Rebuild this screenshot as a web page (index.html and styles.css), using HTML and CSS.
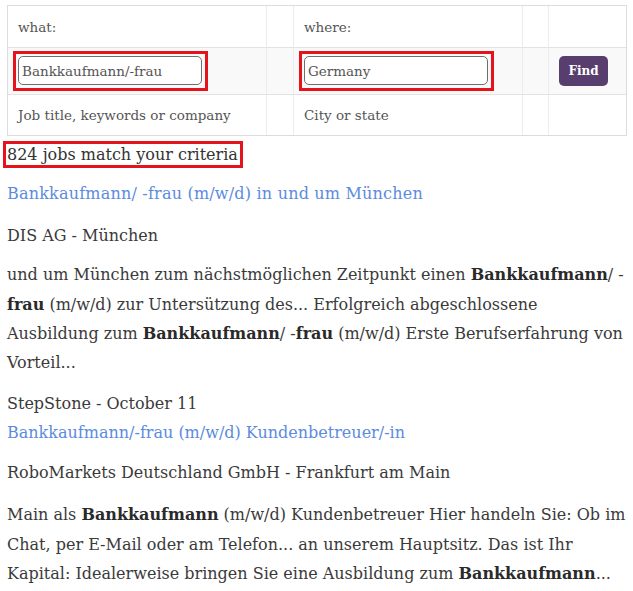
FILE: index.html
```html
<!DOCTYPE html>
<html lang="de">
<head>
<meta charset="utf-8">
<title>Jobs</title>
<link rel="stylesheet" href="styles.css">
</head>
<body>
<div class="page">
  <div class="search">
    <div class="cell label">what:</div>
    <div class="cell"></div>
    <div class="cell label">where:</div>
    <div class="cell"></div>
    <div class="cell end"></div>

    <div class="cell field"><span class="mark"><input type="text" value="Bankkaufmann/-frau"></span></div>
    <div class="cell field"></div>
    <div class="cell field"><span class="mark"><input type="text" value="Germany"></span></div>
    <div class="cell field"></div>
    <div class="cell field end"><button class="find" type="button">Find</button></div>

    <div class="cell label last">Job title, keywords or company</div>
    <div class="cell last"></div>
    <div class="cell label last">City or state</div>
    <div class="cell last"></div>
    <div class="cell last end"></div>
  </div>

  <p class="count"><span class="mark-text">824 jobs match your criteria</span></p>

  <p class="title"><a href="#">Bankkaufmann/ -frau (m/w/d) in und um München</a></p>
  <p class="company">DIS AG - München</p>
  <p class="snippet">und um München zum nächstmöglichen Zeitpunkt einen <b>Bankkaufmann</b>/ -<b>frau</b> (m/w/d) zur Untersützung des... Erfolgreich abgeschlossene Ausbildung zum <b>Bankkaufmann</b>/ -<b>frau</b> (m/w/d) Erste Berufserfahrung von Vorteil...</p>
  <p class="source">StepStone - October 11<br><a href="#">Bankkaufmann/-frau (m/w/d) Kundenbetreuer/-in</a></p>
  <p class="company2">RoboMarkets Deutschland GmbH - Frankfurt am Main</p>
  <p class="snippet">Main als <b>Bankkaufmann</b> (m/w/d) Kundenbetreuer Hier handeln Sie: Ob im Chat, per E-Mail oder am Telefon... an unserem Hauptsitz. Das ist Ihr Kapital: Idealerweise bringen Sie eine Ausbildung zum <b>Bankkaufmann</b>...</p>
</div>
</body>
</html>
```

FILE: styles.css
```css
body {
  margin: 0;
  background: #fff;
  color: #3a3a3a;
  font-family: "DejaVu Serif", "Liberation Serif", serif;
}

.page {
  padding: 5px 6px 0 7px;
}

.search {
  display: grid;
  grid-template-columns: 259px 27px 229px 26px 1fr;
  grid-template-rows: 42px 47px 40px;
  border: 1px solid #dcdcdc;
}

.cell {
  display: flex;
  align-items: center;
  border-right: 1px solid #ececec;
  border-bottom: 1px solid #e3e3e3;
  font-size: 13.5px;
  color: #555;
}

.cell.end {
  border-right: 0;
}

.cell.last {
  border-bottom: 0;
}

.label {
  padding-left: 10px;
}

.field {
  background: #f9f9f9;
  padding-left: 5px;
}

.mark {
  display: inline-block;
  border: 3px solid #e5141c;
  padding: 2px 3px 3px 2px;
}

.mark input {
  display: block;
  box-sizing: border-box;
  width: 184px;
  height: 29px;
  margin: 0;
  padding: 0 3px;
  border: 1px solid #6f6f6f;
  border-radius: 5px;
  background: #fff;
  color: #555;
  font-family: "DejaVu Serif", serif;
  font-size: 13.5px;
}

.find {
  margin-left: 5px;
  width: 49px;
  height: 30px;
  border: 0;
  border-radius: 5px;
  background: #583e6e;
  color: #fff;
  font-family: "DejaVu Serif", serif;
  font-weight: bold;
  font-size: 12px;
  padding: 0;
}

p {
  margin: 0;
  font-size: 16px;
  line-height: 29.3px;
}

.count {
  margin: 4px 0 10px;
}

.mark-text {
  display: inline-block;
  margin-left: -4px;
  padding: 0 2px 0 1px;
  border: 3px solid #e5141c;
  line-height: 21px;
  color: #333;
}

a {
  color: #5c8be0;
  text-decoration: none;
}

.title a {
  letter-spacing: 0.2px;
}

b {
  color: #2a2a2a;
}

.title {
  margin-bottom: 12.7px;
}

.company {
  margin-bottom: 9.7px;
}

.snippet {
  margin-bottom: 11.7px;
}

.source {
  margin-bottom: 10.7px;
}

.company2 {
  margin-bottom: 12.7px;
}
```
